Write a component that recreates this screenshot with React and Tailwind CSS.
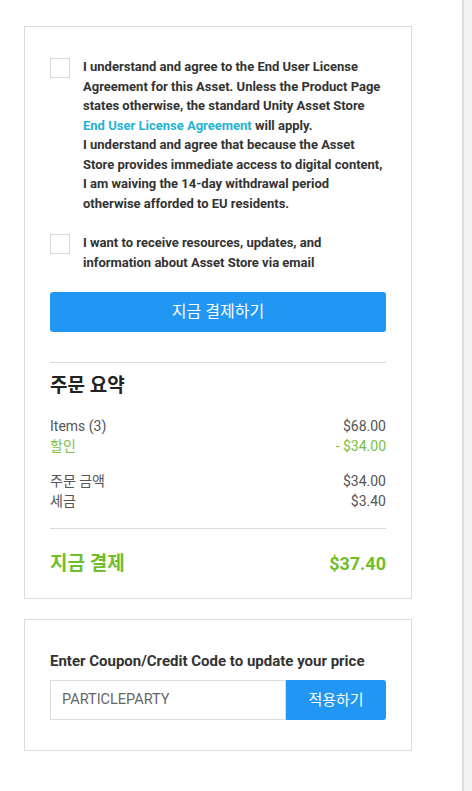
import React from "react";

const font = { fontFamily: "Roboto, 'Noto Sans CJK KR', sans-serif" };

function Checkbox() {
  return <span className="mt-[1px] block h-[20px] w-[20px] shrink-0 border border-[#dcdcdc] bg-white" />;
}

function Row({ label, value, green }) {
  return (
    <div
      className={`flex justify-between text-[14px] leading-[20px] ${
        green ? "text-[#7ac143]" : "text-[#555]"
      }`}
    >
      <span>{label}</span>
      <span>{value}</span>
    </div>
  );
}

export default function App() {
  return (
    <div className="flex min-h-[791px] bg-white" style={font}>
      <div className="w-[462px] shrink-0">
        <div className="ml-[24px] mt-[26px] w-[388px] border border-[#dcdcdc] bg-white px-[25px] pb-[20px] pt-[30px]">
          <div className="flex gap-[13px]">
            <Checkbox />
            <p className="text-[13px] font-bold leading-[19.5px] text-[#333]">
              I understand and agree to the End User License Agreement for this
              Asset. Unless the Product Page states otherwise, the standard
              Unity Asset Store{" "}
              <span className="text-[#1fb4d2]">End User License Agreement</span>{" "}
              will apply.
              <br />I understand and agree that because the Asset Store provides
              immediate access to digital content, I am waiving the 14-day
              withdrawal period otherwise afforded to EU residents.
            </p>
          </div>
          <div className="mt-[20px] flex gap-[13px]">
            <Checkbox />
            <p className="text-[13px] font-bold leading-[19.5px] text-[#333]">
              I want to receive resources, updates, and information about Asset
              Store via email
            </p>
          </div>
          <button className="mt-[20px] h-[40px] w-full rounded-[3px] bg-[#2196f3] text-[16px] text-white">
            지금 결제하기
          </button>
          <div className="mt-[30px] border-t border-[#dcdcdc]" />
          <h2 className="mt-[10px] text-[19px] font-bold leading-[26px] text-[#222]">
            주문 요약
          </h2>
          <div className="mt-[17px]">
            <Row label="Items (3)" value="$68.00" />
            <Row label="할인" value="- $34.00" green />
          </div>
          <div className="mt-[15px]">
            <Row label="주문 금액" value="$34.00" />
            <Row label="세금" value="$3.40" />
          </div>
          <div className="mt-[17px] border-t border-[#dcdcdc]" />
          <div className="mt-[21px] flex items-center justify-between font-bold leading-[28px] text-[#6fbe2c]">
            <span className="text-[19px]">지금 결제</span>
            <span className="text-[18px]">$37.40</span>
          </div>
        </div>

        <div className="ml-[24px] mt-[20px] w-[388px] border border-[#dcdcdc] bg-white px-[25px] pb-[30px] pt-[31px]">
          <p className="text-[15px] font-bold leading-[20px] text-[#333]">
            Enter Coupon/Credit Code to update your price
          </p>
          <div className="mt-[9px] flex h-[40px]">
            <div className="flex flex-1 items-center border border-[#dcdcdc] px-[11px] text-[14.5px] text-[#666]">
              PARTICLEPARTY
            </div>
            <button className="w-[100px] rounded-r-[3px] bg-[#2196f3] text-[15px] text-white">
              적용하기
            </button>
          </div>
        </div>
      </div>
      <div className="flex-1 border-l-2 border-[#dcdcdc] bg-[#f3f3f3]" />
    </div>
  );
}
